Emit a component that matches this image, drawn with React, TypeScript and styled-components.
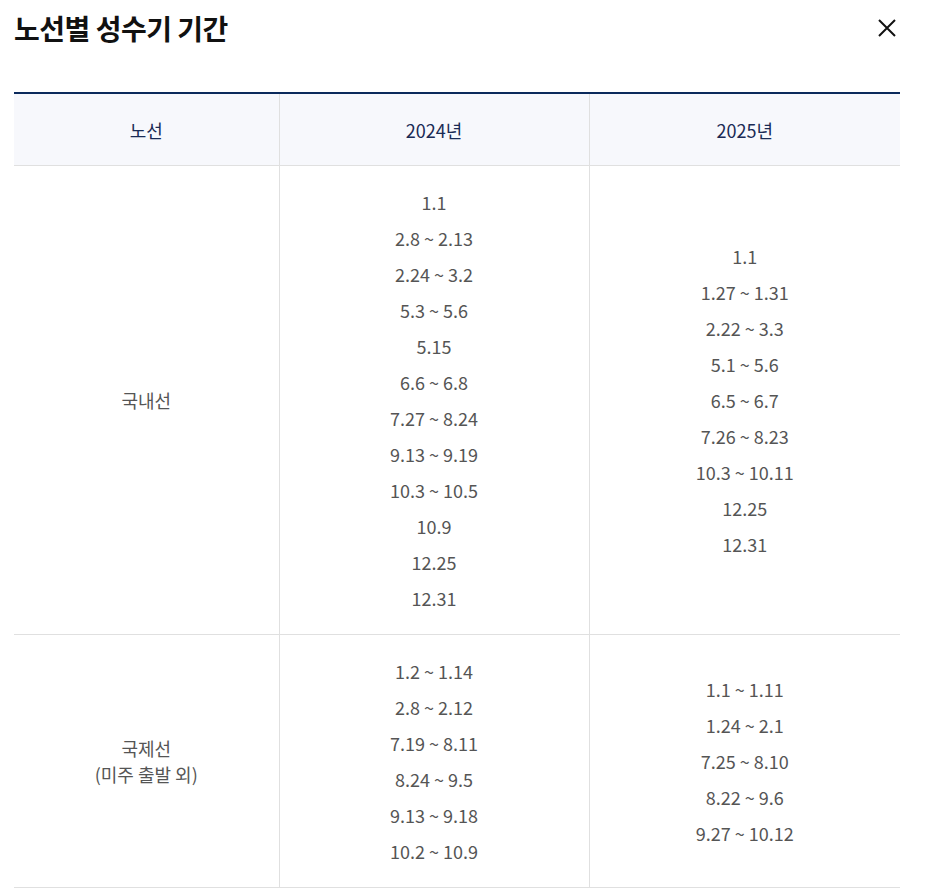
import React from "react";
import styled, { createGlobalStyle } from "styled-components";

const Global = createGlobalStyle`
  html, body { margin: 0; padding: 0; background: #fff; }
  body { font-family: "Noto Sans CJK KR", "Noto Sans", sans-serif; }
`;

const Page = styled.div`
  padding: 0 28px 0 14px;
`;

const Header = styled.div`
  display: flex;
  align-items: center;
  justify-content: space-between;
  height: 56px;
  margin-bottom: 36px;
`;

const Title = styled.h1`
  margin: 0;
  font-size: 28px;
  font-weight: 700;
  color: #111;
  letter-spacing: -0.5px;
`;

const CloseButton = styled.button`
  border: 0;
  background: none;
  padding: 0;
  width: 24px;
  height: 24px;
  display: flex;
  align-items: center;
  justify-content: center;
  margin-right: 1px;
  cursor: pointer;
`;

const Table = styled.table`
  width: 100%;
  border-collapse: collapse;
  border-top: 2px solid #0b2a5c;
  table-layout: fixed;
`;

const Th = styled.th`
  height: 71px;
  background: #f7f8fc;
  font-weight: 400;
  font-size: 18px;
  color: #1a2b55;
  border-bottom: 1px solid #e0e0e0;
  border-left: 1px solid #e0e0e0;
  &:first-child { border-left: 0; }
  padding: 0;
`;

const Td = styled.td`
  padding: 18px 0;
  text-align: center;
  vertical-align: middle;
  border-bottom: 1px solid #e0e0e0;
  border-left: 1px solid #e0e0e0;
  &:first-child { border-left: 0; }
  font-size: 18px;
  color: #555;
  line-height: 36px;
`;

const RouteLabel = styled.div`
  font-size: 18px;
  line-height: 26px;
  color: #555;
`;

const DateLine = styled.div`
  font-size: 18px;
  line-height: 36px;
`;

const rows = [
  {
    route: ["국내선"],
    y2024: ["1.1", "2.8 ~ 2.13", "2.24 ~ 3.2", "5.3 ~ 5.6", "5.15", "6.6 ~ 6.8", "7.27 ~ 8.24", "9.13 ~ 9.19", "10.3 ~ 10.5", "10.9", "12.25", "12.31"],
    y2025: ["1.1", "1.27 ~ 1.31", "2.22 ~ 3.3", "5.1 ~ 5.6", "6.5 ~ 6.7", "7.26 ~ 8.23", "10.3 ~ 10.11", "12.25", "12.31"],
  },
  {
    route: ["국제선", "(미주 출발 외)"],
    y2024: ["1.2 ~ 1.14", "2.8 ~ 2.12", "7.19 ~ 8.11", "8.24 ~ 9.5", "9.13 ~ 9.18", "10.2 ~ 10.9"],
    y2025: ["1.1 ~ 1.11", "1.24 ~ 2.1", "7.25 ~ 8.10", "8.22 ~ 9.6", "9.27 ~ 10.12"],
  },
];

export default function App() {
  return (
    <Page>
      <Global />
      <Header>
        <Title>노선별 성수기 기간</Title>
        <CloseButton aria-label="닫기">
          <svg width="18" height="18" viewBox="0 0 18 18">
            <path d="M1 1 L17 17 M17 1 L1 17" stroke="#111" strokeWidth="2" />
          </svg>
        </CloseButton>
      </Header>
      <Table>
        <colgroup>
          <col style={{ width: 265 }} />
          <col style={{ width: 310 }} />
          <col />
        </colgroup>
        <thead>
          <tr>
            <Th>노선</Th>
            <Th>2024년</Th>
            <Th>2025년</Th>
          </tr>
        </thead>
        <tbody>
          {rows.map((r, i) => (
            <tr key={i}>
              <Td>
                {r.route.map((t) => (
                  <RouteLabel key={t}>{t}</RouteLabel>
                ))}
              </Td>
              <Td>
                {r.y2024.map((d, j) => (
                  <DateLine key={j}>{d}</DateLine>
                ))}
              </Td>
              <Td>
                {r.y2025.map((d, j) => (
                  <DateLine key={j}>{d}</DateLine>
                ))}
              </Td>
            </tr>
          ))}
        </tbody>
      </Table>
    </Page>
  );
}
